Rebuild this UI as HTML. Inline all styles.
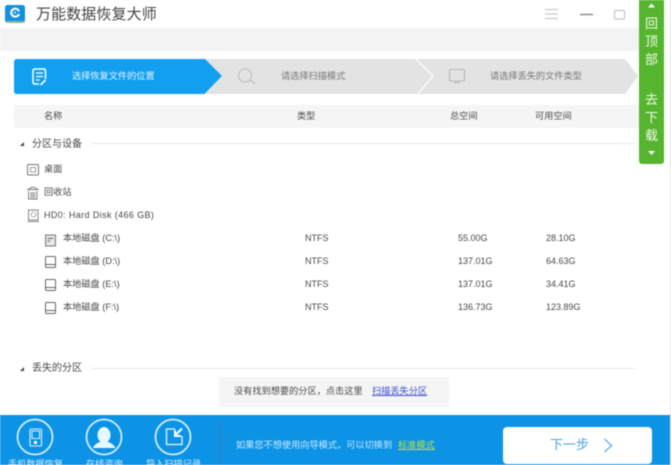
<!DOCTYPE html>
<html><head><meta charset="utf-8"><style>
html,body{margin:0;padding:0;background:#fff;width:671px;height:465px;overflow:hidden}
#w{position:relative;width:671px;height:465px;overflow:hidden;font-family:"Liberation Sans","Noto Sans CJK SC",sans-serif;filter:blur(.4px)}
.t{position:absolute;white-space:nowrap;font-size:9.2px;line-height:12px;color:#484848}
.n{font-size:9px}
.b{position:absolute}
svg{position:absolute;left:0;top:0}
</style></head><body><div id="w">
<div class="b" style="left:0;top:28px;width:640px;height:23px;background:#f3f3f3"></div>
<div class="b" style="left:14px;top:105px;width:625px;height:23px;background:#f5f5f5"></div>
<div class="b" style="left:0;top:415px;width:671px;height:50px;background:#0c93e6"></div>
<div class="b" style="left:219px;top:377px;width:230px;height:30px;background:#f5f5f5;border-radius:2px"></div>
<div class="b" style="left:503px;top:427px;width:149px;height:37px;background:#fff;border-radius:4px"></div>
<div class="b" style="left:639px;top:0;width:25px;height:164px;background:#56b52f;border-radius:0 0 3px 3px"></div>
<div class="b" style="left:670px;top:0;width:1px;height:465px;background:#e4e4e4"></div>

<svg width="671" height="465" viewBox="0 0 671 465" fill="none">
<!-- logo -->
<rect x="5" y="5" width="20" height="18" rx="2.500" fill="#1590dc"/>
<path d="M5.500 21H24.500V21.500Q24.500 23 23 23H7Q5.500 23 5.500 21.500Z" fill="#8fb7a0"/>
<path d="M19 11.300A4 4 0 1 0 19 14" stroke="#fff" stroke-width="2"/>
<circle cx="15" cy="12.500" r="1.100" fill="#cfe9fa"/>
<!-- steps -->
<path d="M205 59H625L638 76L625 94H205Z" fill="#e3e3e3"/>
<path d="M415 58L433 76L417 95" stroke="#fff" stroke-width="1.300"/>
<path d="M17 59H205L222 76L205 94H17Q14 94 14 91V62Q14 59 17 59Z" fill="#129ff0"/>
<path d="M222.500 76L205 94" stroke="#f4f4f4" stroke-width=".6"/>
<!-- step1 icon -->
<path d="M39 84H35Q33 84 33 82V71Q33 69 35 69H43.500Q45.500 69 45.500 71V79" stroke="#fff" stroke-width="1.500"/>
<path d="M36 73H43M36 76.500H43M36 80H39.500" stroke="#fff" stroke-width="1.200"/>
<path d="M40.500 85L45.500 80" stroke="#fff" stroke-width="1.600"/>
<!-- search -->
<circle cx="245" cy="75.500" r="6.500" stroke="#bcbcbc" stroke-width="1"/>
<path d="M250 80L255 83.500" stroke="#bcbcbc" stroke-width="1.200"/>
<!-- monitor -->
<rect x="449.500" y="69.500" width="15" height="11.500" rx="1" stroke="#b8b8b8" stroke-width="1.100"/>
<path d="M454 82.500H460" stroke="#b8b8b8" stroke-width="1.200"/>
<!-- window buttons -->
<path d="M545 9.500H558M545 14H558M545 18.500H558" stroke="#c9c9c9" stroke-width="1.200"/>
<path d="M580 14.500H593" stroke="#8e8e8e" stroke-width="1.500"/>
<rect x="614.500" y="10.500" width="10" height="8.500" rx="1" stroke="#c4c4c4" stroke-width="1.200"/>
<!-- green arrows -->
<path d="M651.500 3.500L655 7.500H648Z" fill="#fff"/>
<path d="M648 151H655L651.500 155Z" fill="#fff"/>
<!-- section lines -->
<path d="M91 143.500H635" stroke="#e8eaee" stroke-width="1"/>
<path d="M91 368.500H635" stroke="#e8e8e8" stroke-width="1"/>
<path d="M20 146L24 146L24 142Z" fill="#444"/>
<path d="M20 371L24 371L24 367Z" fill="#444"/>
<!-- desktop -->
<rect x="27.500" y="164.500" width="11" height="10.500" rx="1.500" stroke="#777" stroke-width="1"/>
<rect x="30.500" y="167.500" width="5" height="4.500" stroke="#888" stroke-width=".8"/>
<!-- bin -->
<path d="M27 189.500H38.500M29 189L32 187.200H34L37 189M28.500 191V199H37V191M31 192V198M32.800 192V198M34.600 192V198" stroke="#777" stroke-width=".9"/>
<!-- HD0 -->
<path d="M28.500 210H38V220H28.500ZM27.500 221.500H39" stroke="#888" stroke-width="1"/>
<circle cx="33.500" cy="214.500" r="2.500" stroke="#999" stroke-width=".8"/>
<!-- drives -->
<rect x="45.500" y="235" width="10" height="11" fill="#e6e6e6" stroke="#777" stroke-width="1"/>
<path d="M47.500 238.500H53.500M47.500 241H50" stroke="#666" stroke-width="1"/>
<rect x="45.500" y="256.500" width="10" height="11" rx="1" stroke="#666" stroke-width="1"/><path d="M46 264.500H55" stroke="#666" stroke-width="1"/>
<rect x="45.500" y="279.500" width="10" height="11" rx="1" stroke="#666" stroke-width="1"/><path d="M46 287.500H55" stroke="#666" stroke-width="1"/>
<rect x="45.500" y="302.500" width="10" height="11" rx="1" stroke="#666" stroke-width="1"/><path d="M46 310.500H55" stroke="#666" stroke-width="1"/>
<!-- bottom icons -->
<circle cx="35" cy="437" r="17.500" stroke="#d8effc" stroke-width="1.700"/>
<rect x="30" y="429" width="11.500" height="17" rx="1" stroke="#dff2fd" stroke-width="1.100"/>
<rect x="32" y="431" width="7.500" height="7.500" stroke="#dff2fd" stroke-width="1"/>
<rect x="34" y="441" width="3" height="3" fill="#fff"/>
<circle cx="104" cy="437" r="17.500" stroke="#d8effc" stroke-width="1.700"/>
<ellipse cx="104" cy="435" rx="6.500" ry="8" fill="#e8f6fe"/>
<path d="M93 448Q94.500 443.500 101 441.500H107Q113.500 443.500 115.500 448Z" fill="#e8f6fe"/>
<circle cx="173" cy="437" r="17.500" stroke="#d8effc" stroke-width="1.700"/>
<path d="M175 429H166.500V444.500H182V436" stroke="#e8f6fe" stroke-width="1.300"/>
<path d="M182 428.500L176 434.500M175 430V436H181" stroke="#fff" stroke-width="2"/>
<path d="M220.500 421V465" stroke="#3a7fb5" stroke-width="1"/>
<path d="M604.500 439L611.500 445.500L604.500 452" stroke="#6ab5e8" stroke-width="1.500"/>
</svg>

<div class="t" style="left:36px;top:5px;font-size:15px;line-height:20px;color:#444;letter-spacing:.1px">万能数据恢复大师</div>
<div class="t" style="left:72px;top:70px;color:#e8f6ff">选择恢复文件的位置</div>
<div class="t" style="left:281px;top:70px;color:#777">请选择扫描模式</div>
<div class="t" style="left:490px;top:70px;color:#777">请选择丢失的文件类型</div>

<div class="t" style="left:44px;top:110px">名称</div>
<div class="t" style="left:297px;top:110px">类型</div>
<div class="t" style="left:450px;top:110px">总空间</div>
<div class="t" style="left:535px;top:110px">可用空间</div>

<div class="t" style="left:32px;top:139px;font-size:10px">分区与设备</div>
<div class="t" style="left:44px;top:163px">桌面</div>
<div class="t" style="left:44px;top:186px">回收站</div>
<div class="t n" style="left:44px;top:209px;letter-spacing:.38px">HD0: Hard Disk (466 GB)</div>

<div class="t" style="left:63px;top:232px">本地磁盘 (C:\)</div>
<div class="t" style="left:63px;top:255px">本地磁盘 (D:\)</div>
<div class="t" style="left:63px;top:278px">本地磁盘 (E:\)</div>
<div class="t" style="left:63px;top:301px">本地磁盘 (F:\)</div>

<div class="t n" style="left:305px;top:232px">NTFS</div>
<div class="t n" style="left:305px;top:255px">NTFS</div>
<div class="t n" style="left:305px;top:278px">NTFS</div>
<div class="t n" style="left:305px;top:301px">NTFS</div>

<div class="t n" style="left:458px;top:232px">55.00G</div>
<div class="t n" style="left:458px;top:255px">137.01G</div>
<div class="t n" style="left:458px;top:278px">137.01G</div>
<div class="t n" style="left:458px;top:301px">136.73G</div>

<div class="t n" style="left:546px;top:232px">28.10G</div>
<div class="t n" style="left:546px;top:255px">64.63G</div>
<div class="t n" style="left:546px;top:278px">34.41G</div>
<div class="t n" style="left:546px;top:301px">123.89G</div>

<div class="t" style="left:32px;top:363px;font-size:10px">丢失的分区</div>
<div class="t" style="left:234px;top:385px">没有找到想要的分区，点击这里</div>
<div class="t" style="left:372px;top:385px;color:#3a4fd0;text-decoration:underline">扫描丢失分区</div>

<div class="t" style="left:8px;top:458px;color:#d5eefc">手机数据恢复</div>
<div class="t" style="left:86px;top:458px;color:#d5eefc">在线咨询</div>
<div class="t" style="left:146px;top:458px;color:#d5eefc">导入扫描记录</div>

<div class="t" style="left:236px;top:439px;color:#cbe9fb">如果您不想使用向导模式，可以切换到</div>
<div class="t" style="left:398px;top:439px;color:#b6e04a;text-decoration:underline">标准模式</div>
<div class="t" style="left:550px;top:437px;font-size:13px;line-height:16px;color:#4ba3de">下一步</div>

<div class="t" style="left:645px;top:15px;width:13px;font-size:13px;line-height:18px;color:#f2fbe9;white-space:normal">回顶部</div>
<div class="t" style="left:645px;top:91px;width:13px;font-size:13px;line-height:18px;color:#f2fbe9;white-space:normal">去下载</div>
</div></body></html>
